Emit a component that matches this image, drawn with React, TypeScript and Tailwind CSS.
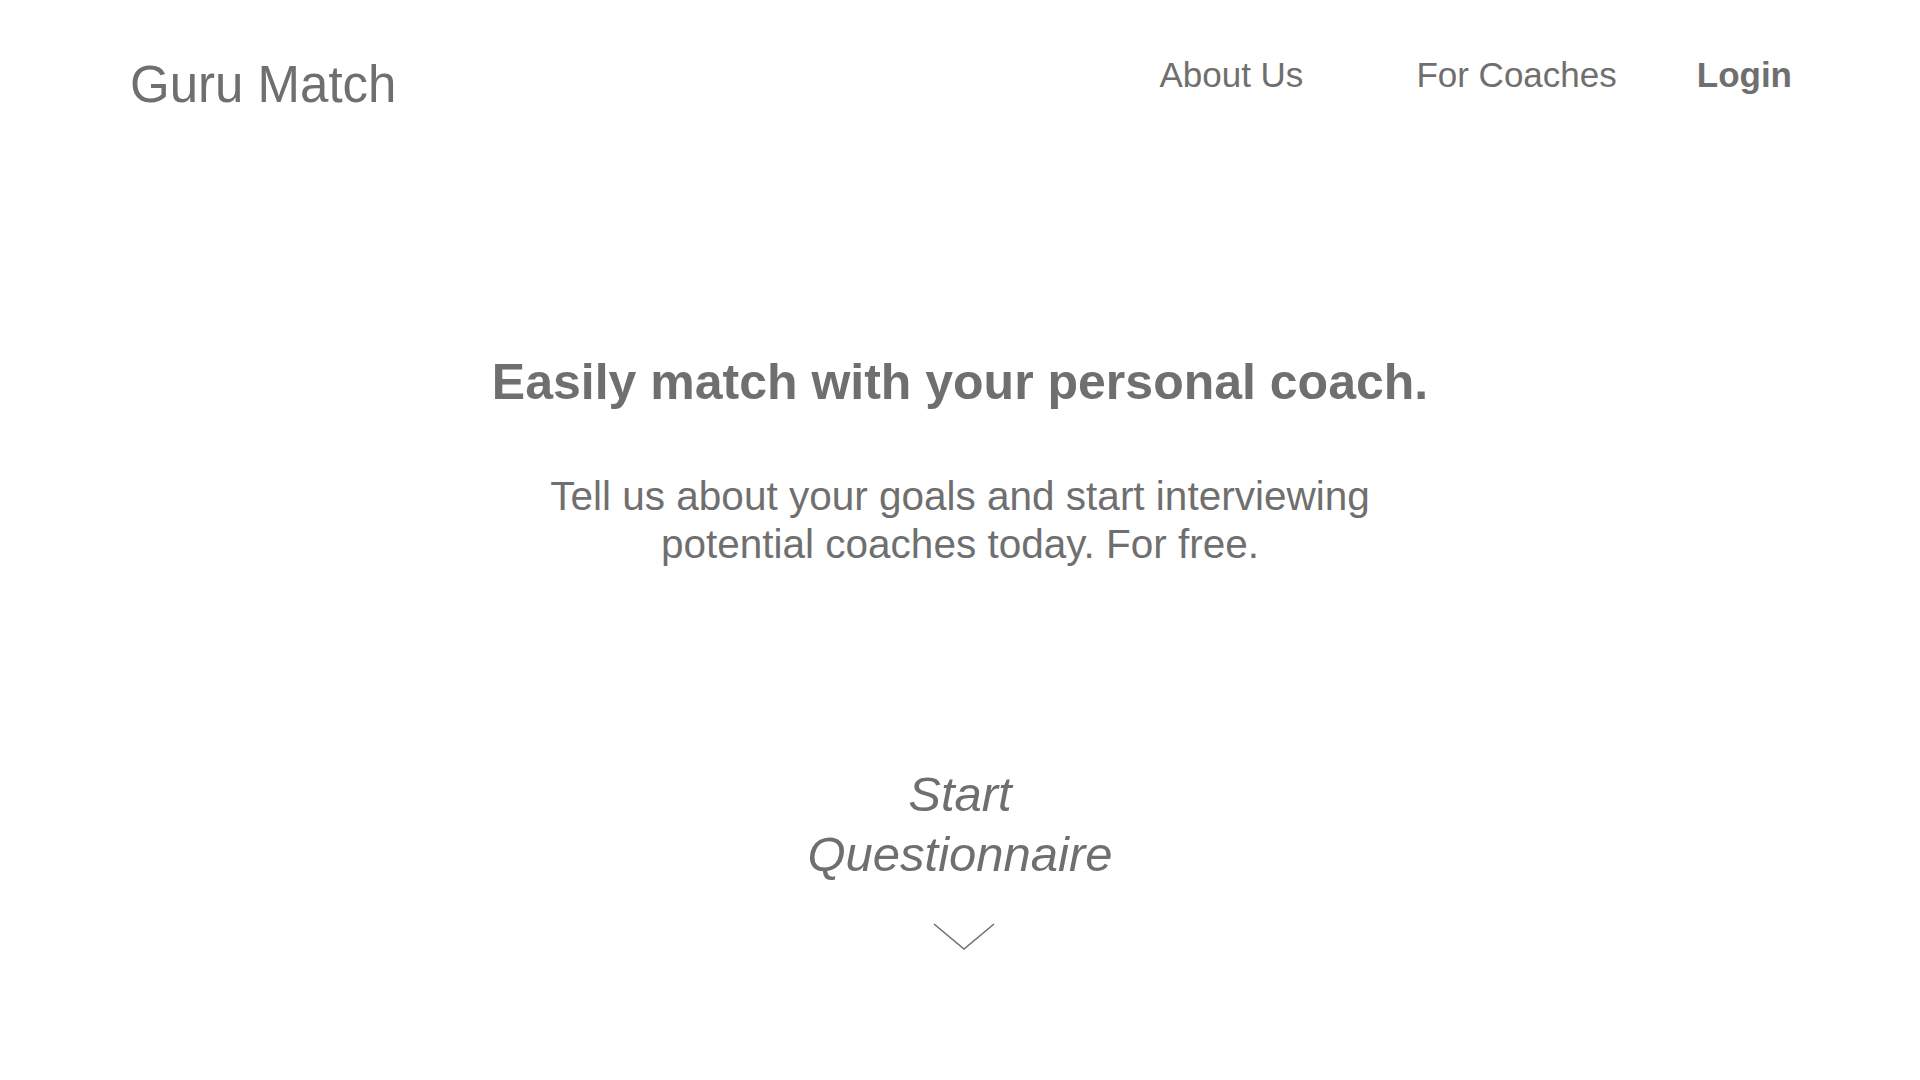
const FONT = "font-['Liberation_Sans',Arial,sans-serif]";

/* ---------------------------------------------------------------- */
/* Header — logo and top navigation                                  */
/* ---------------------------------------------------------------- */
function Header() {
  return (
    <header className="flex items-start justify-between pl-[130px] pr-[128px] pt-[58px]">
      <div className="mt-px text-[51px] leading-none text-[#6f6f6f]">
        Guru Match
      </div>
      <nav className="-mt-px flex items-start text-[35px] leading-none text-[#6f6f6f]">
        <a href="#">About Us</a>
        <a href="#" className="ml-[113px]">
          For Coaches
        </a>
        <a href="#" className="ml-[80px] font-bold">
          Login
        </a>
      </nav>
    </header>
  );
}

/* ---------------------------------------------------------------- */
/* Hero — headline, pitch and questionnaire call to action           */
/* ---------------------------------------------------------------- */
function Hero() {
  return (
    <main className="flex flex-col items-center text-center text-[#6f6f6f]">
      <h1 className="mt-[247px] text-[50px] font-bold leading-none">
        Easily match with your personal coach.
      </h1>
      <p className="mt-[65px] max-w-[860px] text-[40.5px] leading-[48px]">
        Tell us about your goals and start interviewing potential coaches
        today. For free.
      </p>
      <a
        href="#"
        className="mt-[196px] block max-w-[340px] text-[49px] italic leading-[60px]"
      >
        Start Questionnaire
      </a>
      <svg
        width="62"
        height="28"
        viewBox="0 0 62 28"
        className="ml-2 mt-[39px]"
        fill="none"
      >
        <polyline
          points="1,1 31,26 61,1"
          stroke="#6f6f6f"
          strokeWidth="1.6"
        />
      </svg>
    </main>
  );
}

export default function App() {
  return (
    <div className={`min-h-screen bg-white ${FONT}`}>
      <Header />
      <Hero />
    </div>
  );
}
